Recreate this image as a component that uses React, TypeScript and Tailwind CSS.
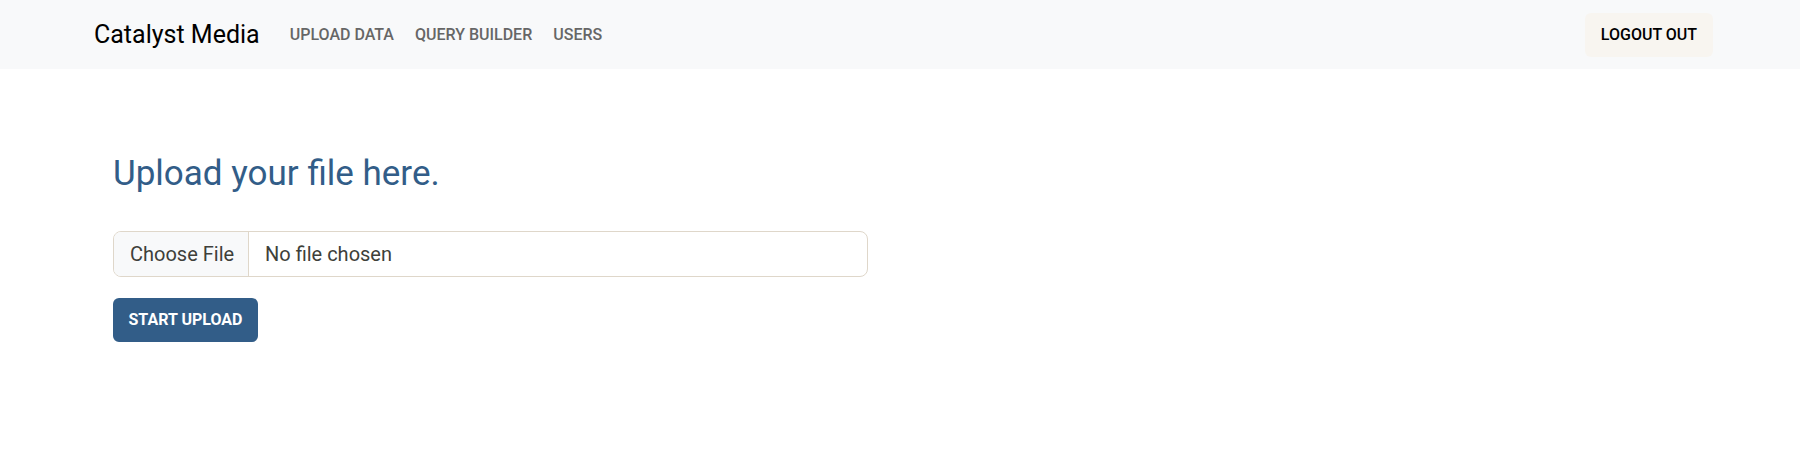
export default function App() {
  const links = ['UPLOAD DATA', 'QUERY BUILDER', 'USERS'];

  return (
    <div className="min-h-[460px] bg-white font-['Roboto',sans-serif] text-[#3e3f3a]">
      {/* Navbar */}
      <nav className="h-[69px] bg-[#f8f9fa] flex items-center pl-[94px] pr-[87px]">
        <span className="text-[25px] text-black leading-none">Catalyst Media</span>
        <ul className="flex items-center gap-[21px] ml-[30px]">
          {links.map((l) => (
            <li key={l} className="text-[16px] font-medium text-[#666] leading-none">
              {l}
            </li>
          ))}
        </ul>
        <button className="ml-auto h-[44px] px-4 rounded-[6px] bg-[#f8f5f0] text-black text-[16px] font-medium leading-6">
          LOGOUT OUT
        </button>
      </nav>

      {/* Content */}
      <main className="pl-[113px] pt-[84px]">
        <h2 className="text-[35px] leading-[1.2] text-[#325d88] font-normal">Upload your file here.</h2>

        <div className="mt-[36px] w-[755px] h-[46px] flex border border-[#dfd7ca] rounded-[8px] overflow-hidden text-[20px]">
          <div className="w-[135px] shrink-0 whitespace-nowrap bg-[#f8f9fa] border-r border-[#dfd7ca] flex items-center px-4">
            Choose File
          </div>
          <div className="flex items-center px-4 whitespace-nowrap">No file chosen</div>
        </div>

        <button className="mt-[21px] h-[44px] w-[145px] rounded-[6px] bg-[#325d88] text-white text-[16px] font-bold leading-6">
          START UPLOAD
        </button>
      </main>
    </div>
  );
}
